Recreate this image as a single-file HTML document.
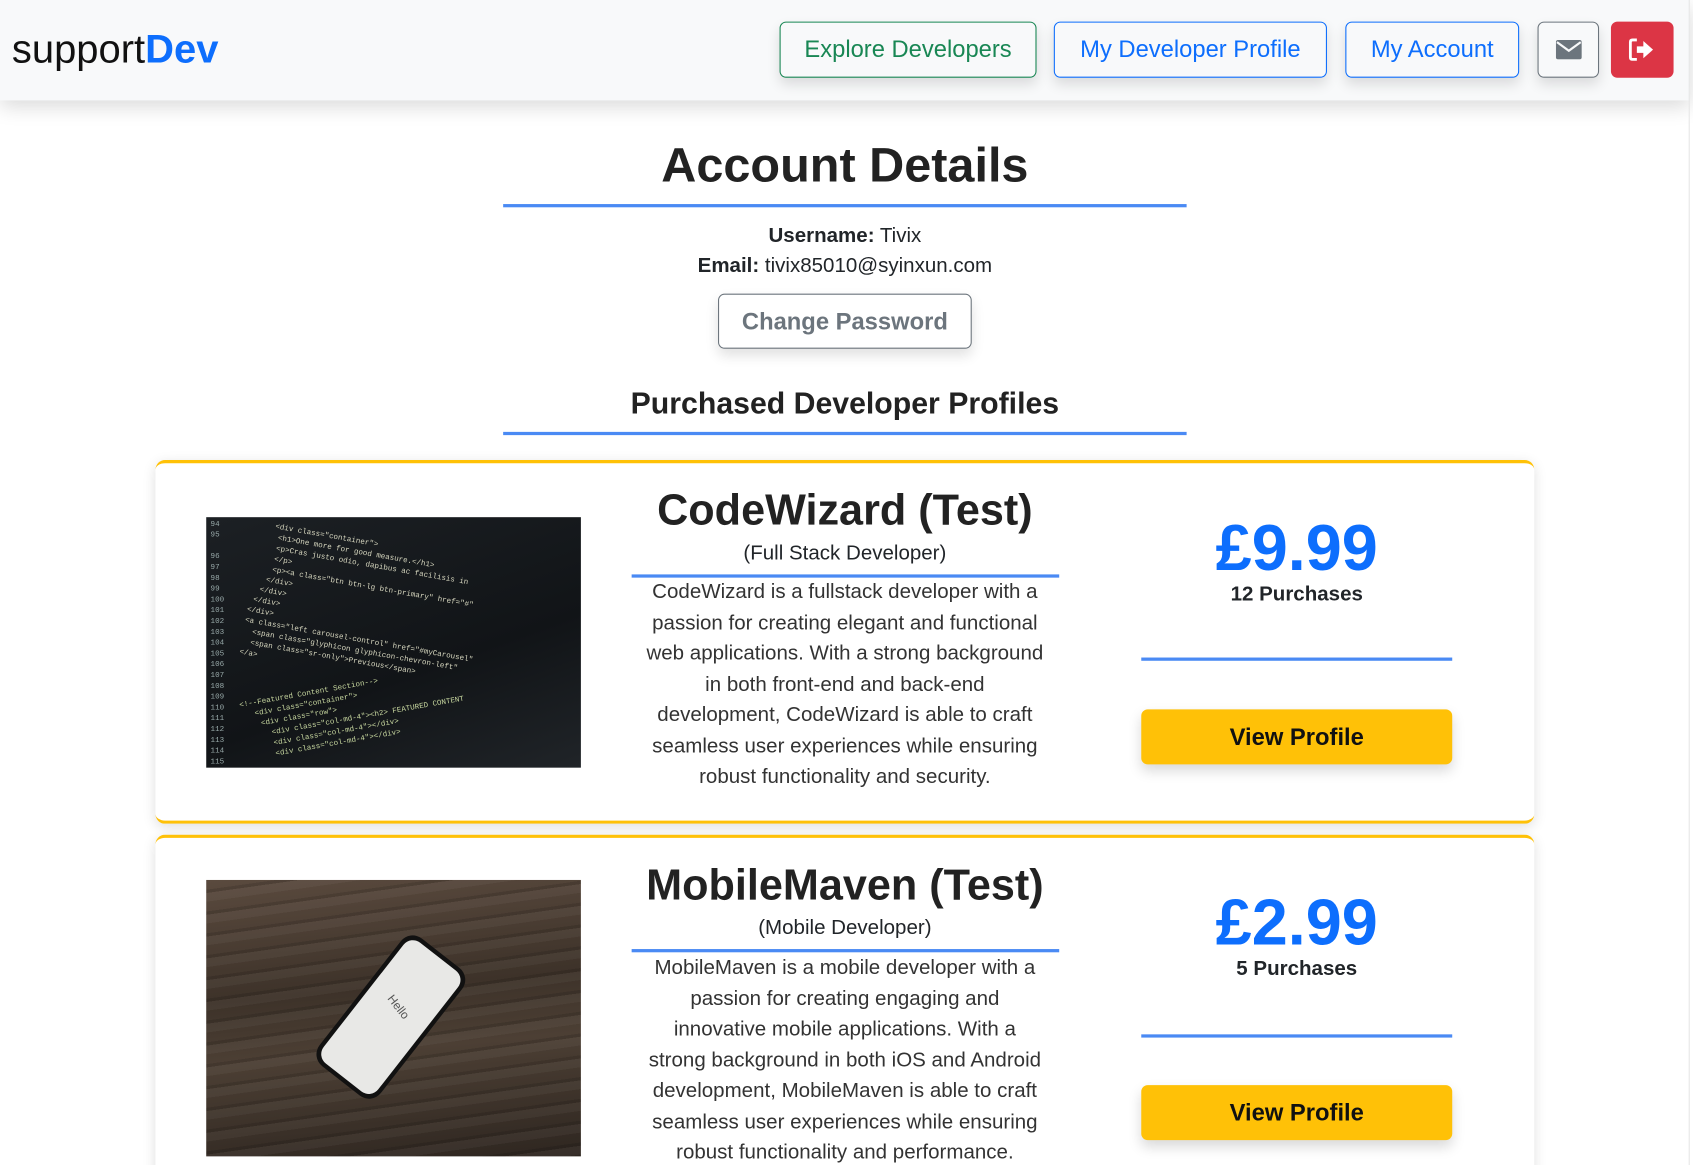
<!DOCTYPE html>
<html><head><meta charset="utf-8"><style>
html,body{margin:0;padding:0;background:#fff;overflow:hidden;width:1693px;height:1165px}
#w{position:absolute;left:0;top:0;width:1568px;height:1079px;transform-origin:0 0;transform:scale(1.07972,1.07970);font-family:"Liberation Sans",Arial,sans-serif;color:#212529;overflow:hidden}
.a{position:absolute}
.nav{left:0;top:0;width:1565px;height:93px;background:#f8f9fa;box-shadow:0 6px 18px rgba(0,0,0,.15)}
.logo{left:11px;top:25px;font-size:37px;color:#111}
.logo b{color:#0d6efd}
.btn{position:absolute;box-sizing:border-box;border-radius:6px;font-size:22px;display:flex;align-items:center;justify-content:center;background:#f8f9fa;box-shadow:0 6px 12px rgba(0,0,0,.12)}
.c{left:0;width:1565px;text-align:center}
.hr{position:absolute;height:3px;background:#4a8af4}
.card{position:absolute;left:144px;width:1277px;box-sizing:border-box;border-top:3px solid #ffc107;border-bottom:3px solid #ffc107;border-radius:9px;background:#fff;box-shadow:0 3px 12px rgba(0,0,0,.12)}
.t{position:absolute;left:420px;width:437px;text-align:center;white-space:nowrap}
.vp{position:absolute;left:913px;width:288px;height:51px;background:#ffc107;border-radius:6px;font-size:22px;font-weight:bold;color:#111;display:flex;align-items:center;justify-content:center;box-shadow:0 6px 12px rgba(0,0,0,.15)}
.price{position:absolute;left:913px;width:288px;text-align:center;color:#0d6efd;font-weight:bold;font-size:60px}
.pc{position:absolute;left:913px;width:288px;text-align:center;font-weight:bold;font-size:19px}
.desc{font-size:19px;line-height:28.5px;color:#333}
.code{font-family:"Liberation Mono",monospace;font-size:7px;line-height:10px;white-space:pre;color:#d8d8c0}
</style></head><body><div id="w">
<div class="a nav"></div>
<div class="a logo">support<b>Dev</b></div>
<div class="btn" style="left:722px;top:20px;width:238px;height:52px;border:1px solid #198754;color:#198754">Explore Developers</div>
<div class="btn" style="left:976px;top:20px;width:253px;height:52px;border:1px solid #0d6efd;color:#0d6efd">My Developer Profile</div>
<div class="btn" style="left:1246px;top:20px;width:161px;height:52px;border:1px solid #0d6efd;color:#0d6efd">My Account</div>
<div class="btn" style="left:1424px;top:20px;width:57px;height:52px;border:1px solid #6c757d"><svg width="24" height="18" viewBox="0 0 24 18"><rect x="0" y="0" width="24" height="18" rx="2" fill="#6c757d"/><path d="M1 2 L12 10 L23 2" stroke="#f8f9fa" stroke-width="2" fill="none"/></svg></div>
<div class="btn" style="left:1492px;top:20px;width:58px;height:52px;background:#dc3545;box-shadow:none"><svg width="26" height="22" viewBox="0 0 26 22"><path d="M8 2 H4 Q2 2 2 4 V18 Q2 20 4 20 H8" stroke="#fff" stroke-width="2.6" fill="none"/><path d="M8 8 H14 V3 L23 11 L14 19 V14 H8 Z" fill="#fff"/></svg></div>
<div class="a" style="left:1564px;top:0;width:1px;height:1079px;background:#e6e6e6"></div>

<div class="a c" style="top:127px;font-size:45px;font-weight:bold;color:#222">Account Details</div>
<div class="hr" style="left:466px;top:189px;width:633px"></div>
<div class="a c" style="top:208px;font-size:19px"><b>Username:</b> Tivix</div>
<div class="a c" style="top:236px;font-size:19px"><b>Email:</b> tivix85010@syinxun.com</div>
<div class="btn" style="left:665px;top:272px;width:235px;height:51px;border:1px solid #6c757d;color:#6c757d;background:#fff;font-weight:bold">Change Password</div>
<div class="a c" style="top:358px;font-size:28px;font-weight:bold;color:#222">Purchased Developer Profiles</div>
<div class="hr" style="left:466px;top:400px;width:633px"></div>

<div class="card" style="top:426px;height:337px">
 <div class="a" style="left:47px;top:50px;width:347px;height:232px;background:linear-gradient(160deg,#1c2024,#111417 60%,#202428);overflow:hidden">
  <div class="code a" style="left:4px;top:2px;color:#9aa">94
95

96
97
98
99
100
101
102
103
104
105
106
107
108
109
110
111
112
113
114
115
116</div>
  <div class="code a" style="left:40px;top:0px;transform:rotate(10deg);transform-origin:0 0">      &lt;div class="container"&gt;
       &lt;h1&gt;One more for good measure.&lt;/h1&gt;
       &lt;p&gt;Cras justo odio, dapibus ac facilisis in
       &lt;/p&gt;
       &lt;p&gt;&lt;a class="btn btn-lg btn-primary" href="#"
      &lt;/div&gt;
     &lt;/div&gt;
    &lt;/div&gt;
   &lt;/div&gt;
   &lt;a class="left carousel-control" href="#myCarousel"
     &lt;span class="glyphicon glyphicon-chevron-left"
     &lt;span class="sr-only"&gt;Previous&lt;/span&gt;
   &lt;/a&gt;</div>
  <div class="code a" style="left:30px;top:170px;transform:rotate(-10deg);transform-origin:0 0;color:#c8d8a0">&lt;!--Featured Content Section--&gt;
   &lt;div class="container"&gt;
    &lt;div class="row"&gt;
      &lt;div class="col-md-4"&gt;&lt;h2&gt; FEATURED CONTENT
      &lt;div class="col-md-4"&gt;&lt;/div&gt;
      &lt;div class="col-md-4"&gt;&lt;/div&gt;</div>
 </div>
 <div class="t" style="top:22px;font-size:40px;font-weight:bold;color:#222">CodeWizard (Test)</div>
 <div class="t" style="top:73px;font-size:19px">(Full Stack Developer)</div>
 <div class="hr" style="left:441px;top:103px;width:396px"></div>
 <div class="t desc" style="top:106px">CodeWizard is a fullstack developer with a<br>passion for creating elegant and functional<br>web applications. With a strong background<br>in both front-end and back-end<br>development, CodeWizard is able to craft<br>seamless user experiences while ensuring<br>robust functionality and security.</div>
 <div class="price" style="top:44px">£9.99</div>
 <div class="pc" style="top:111px">12 Purchases</div>
 <div class="hr" style="left:913px;top:180px;width:288px"></div>
 <div class="vp" style="top:228px">View Profile</div>
</div>

<div class="card" style="top:773px;height:340px">
 <div class="a" style="left:47px;top:39px;width:347px;height:256px;background:linear-gradient(175deg,#5a4a3e,#3d3229 40%,#4c3f34 60%,#2e2620);overflow:hidden">
  <div class="a" style="left:0;top:0;width:347px;height:256px;background:repeating-linear-gradient(172deg,rgba(0,0,0,0) 0 9px,rgba(0,0,0,.12) 9px 12px,rgba(255,255,255,.04) 12px 20px)"></div>
  <div class="a" style="left:135px;top:52px;width:72px;height:150px;background:#111;border-radius:14px;transform:rotate(38deg)"></div>
  <div class="a" style="left:139px;top:56px;width:64px;height:142px;background:#e8e8e6;border-radius:11px;transform:rotate(38deg)"></div>
  <div class="a" style="left:165px;top:112px;font-size:11px;color:#555;transform:rotate(52deg)">Hello</div>
 </div>
 <div class="t" style="top:22px;font-size:40px;font-weight:bold;color:#222">MobileMaven (Test)</div>
 <div class="t" style="top:73px;font-size:19px">(Mobile Developer)</div>
 <div class="hr" style="left:441px;top:103px;width:396px"></div>
 <div class="t desc" style="top:107px">MobileMaven is a mobile developer with a<br>passion for creating engaging and<br>innovative mobile applications. With a<br>strong background in both iOS and Android<br>development, MobileMaven is able to craft<br>seamless user experiences while ensuring<br>robust functionality and performance.</div>
 <div class="price" style="top:44px">£2.99</div>
 <div class="pc" style="top:111px">5 Purchases</div>
 <div class="hr" style="left:913px;top:182px;width:288px"></div>
 <div class="vp" style="top:229px">View Profile</div>
</div>
</div></body></html>
